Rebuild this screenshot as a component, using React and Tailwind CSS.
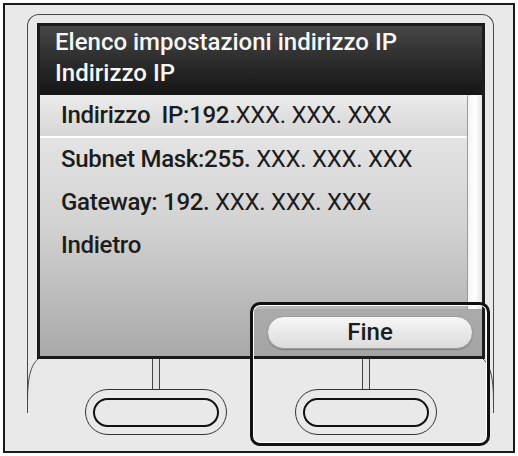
import React from "react";

const rows = [
  { label: "Subnet Mask:255. ", mask: "XXX. XXX. XXX" },
  { label: "Gateway: 192. ", mask: "XXX. XXX. XXX" },
  { label: "Indietro", mask: "" },
];

function HardKey({ className }) {
  return (
    <div className={`flex flex-col items-center ${className}`}>
      <div className="w-[8px] h-[30px] border-x border-[#444] bg-[#e4e4e4]" />
      <div className="w-[142px] h-[46px] rounded-full border border-[#333] flex items-center justify-center">
        <div className="w-[126px] h-[29px] rounded-full border-[2.5px] border-[#111]" />
      </div>
    </div>
  );
}

function Bezel({ className, flip }) {
  return (
    <svg
      width="12"
      height="45"
      viewBox="0 0 12 45"
      className={`absolute top-[344px] ${className}`}
    >
      <path
        d={flip ? "M1 0 C8 6 11.5 18 11.5 42" : "M11 0 C4 6 0.5 18 0.5 42"}
        fill="none"
        stroke="#444"
        strokeWidth="1"
      />
    </svg>
  );
}

export default function App() {
  return (
    <div className="w-[518px] h-[456px] bg-white p-[3px] font-['Roboto',sans-serif]">
      <div className="relative w-[512px] h-[450px] border-2 border-[#1a1a1a] bg-[#e9e9e9]">
        <div className="relative ml-[22px] mt-[9px] w-[467px] h-[399px] border-t border-x border-[#4a4a4a] rounded-t-[12px]">
          <div className="ml-[9px] mt-[8px] w-[448px] h-[336px] border-[3px] border-[#1c1c1c] flex flex-col">
            <div className="h-[69px] pt-[1px] px-[15px] bg-gradient-to-b from-[#474747] to-[#151515] text-[#f7f7f7] text-[24px] leading-[31px] font-medium">
              <div>Elenco impostazioni indirizzo IP</div>
              <div>Indirizzo IP</div>
            </div>
            <div className="flex-1 flex flex-col bg-gradient-to-b from-[#ececec] via-[#d2d2d2] to-[#a9a9a9] text-[#1c1c1c] text-[24px] font-medium">
              <div className="flex-1 flex">
                <div className="flex-1 flex flex-col tracking-[-0.3px]">
                  <div className="h-[43px] pl-[21px] leading-[41px] border-b-2 border-white bg-gradient-to-b from-[#ececec] to-[#d5d5d5] whitespace-pre">
                    Indirizzo  IP:192.<span className="font-normal">XXX. XXX. XXX</span>
                  </div>
                  {rows.map((row) => (
                    <div key={row.label} className="h-[43px] pl-[21px] leading-[43px] whitespace-pre">
                      {row.label}
                      <span className="font-normal">{row.mask}</span>
                    </div>
                  ))}
                </div>
                <div className="w-[15px] border-l border-[#9a9a9a] rounded-tl-[3px] bg-gradient-to-r from-[#f4f4f4] via-white to-[#e6e6e6]" />
              </div>
              <div className="h-[47px] flex">
                <div className="flex-1" />
                <div className="w-[228px] bg-gradient-to-b from-[#ababab] to-[#a4a4a4] flex items-center justify-end pr-[9px]">
                  <div className="w-[206px] h-[33px] rounded-full border border-[#9c9c9c] bg-gradient-to-b from-[#f6f6f6] to-[#dcdcdc] shadow-[0_1px_1px_rgba(0,0,0,0.25)] text-center leading-[31px] text-[#1c1c1c]">
                    Fine
                  </div>
                </div>
              </div>
            </div>
          </div>
          <Bezel className="left-[-1px]" />
          <Bezel className="right-[-1px]" flip />
          <div className="flex">
            <HardKey className="ml-[57px]" />
            <HardKey className="ml-[68px]" />
          </div>
        </div>
        <div className="absolute left-[245px] top-[297px] w-[240px] h-[144px] rounded-[10px] border-[3px] border-[#111] shadow-[inset_0_0_0_1px_white]" />
      </div>
    </div>
  );
}
